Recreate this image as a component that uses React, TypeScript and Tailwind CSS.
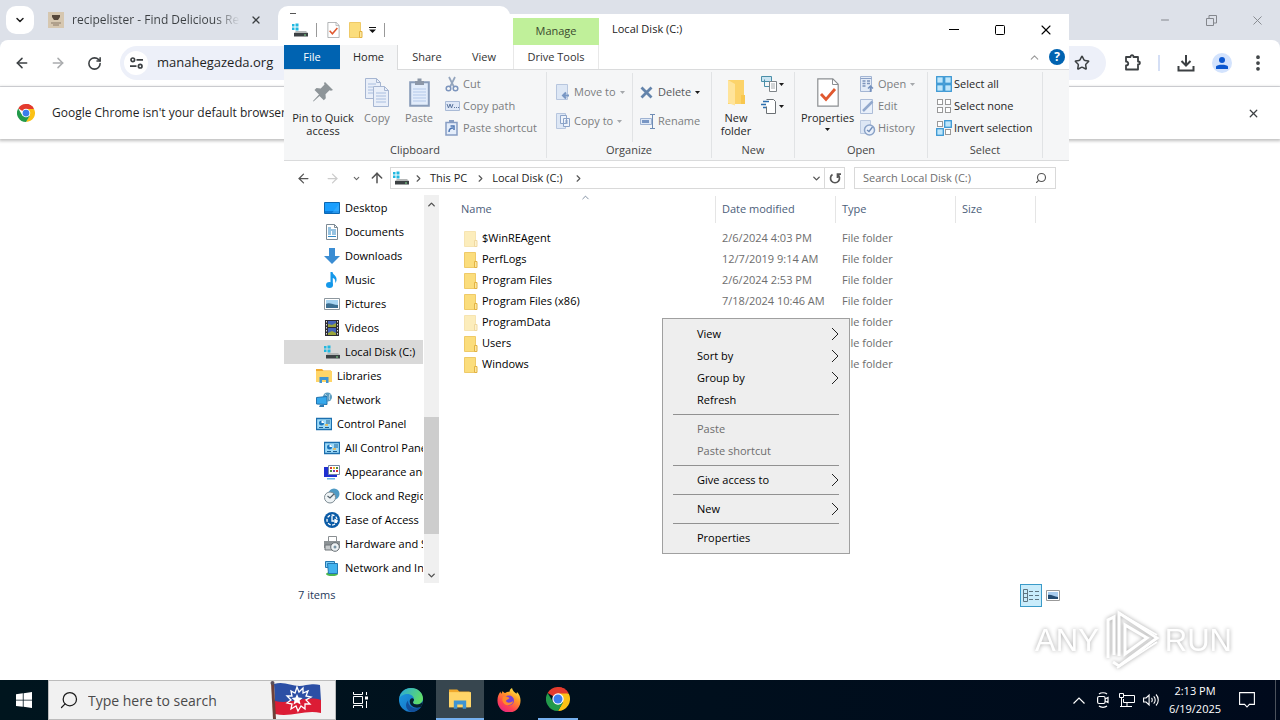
import type { ReactNode } from 'react';
import clsx from 'clsx';
import {
  ArrowLeft,
  ArrowRight,
  ArrowUp,
  ChevronDown,
  ChevronRight,
  ChevronUp,
  Minus,
  MoreVertical,
  RotateCw,
  Search,
  Square,
  Star,
  X,
} from 'lucide-react';

interface FileEntry {
  name: string;
  modified: string;
  hidden?: boolean;
}

interface TreeEntry {
  label: string;
  icon: ReactNode;
  top?: boolean;
  selected?: boolean;
}

interface MenuEntry {
  label: string;
  submenu?: boolean;
  disabled?: boolean;
}

/* ---------- Icons ---------- */

function DriveIcon() {
  return (
    <svg width="16" height="16" viewBox="0 0 16 16" className="shrink-0">
      <path d="M0 2h2.500v2.500H0zM3.500 1.500h3v3h-3zM0 5.500h2.500V8H0zM3.500 5.500h3v3h-3z" fill="#22b8e0" />
      <path d="M4 9h10l2 2H2z" fill="#b5b8b8" />
      <path d="M2 11h14v3.500H2z" fill="#3c4144" />
      <path d="M12 12.500h2v1h-2z" fill="#7fe08c" />
    </svg>
  );
}

function FolderIcon({ faded }: { faded?: boolean }) {
  return (
    <svg width="14" height="16" viewBox="0 0 14 16" className={clsx('shrink-0', faded && 'opacity-50')}>
      <path d="M.5.500h11v15H.500z" fill="#fbdd7c" stroke="#efca68" />
      <path d="M10.500 9.500h2.500v6h-2.500z" fill="#fde8a0" stroke="#e3b343" />
    </svg>
  );
}

function DesktopIcon() {
  return (
    <svg width="16" height="16" viewBox="0 0 16 16">
      <path d="M.5 2.500h15v11H.500z" fill="#1a9fff" stroke="#0b67b2" />
      <path d="M1 11h14v2H1z" fill="#0a7ad8" />
      <path d="M8 13 15 4v9z" fill="#43b4ff" opacity=".5" />
    </svg>
  );
}

function DocumentIcon() {
  return (
    <svg width="16" height="16" viewBox="0 0 16 16">
      <path d="M2.500.500h8l3 3v12h-11z" fill="#fff" stroke="#7d8a94" />
      <path d="M4 4h3M4 6h8M4 8h3M8 8h4M4 10h3M8 10h4M4 12.500h8" stroke="#2f87c4" />
      <path d="M10.500.500v3h3" fill="none" stroke="#7d8a94" />
    </svg>
  );
}

function DownloadsIcon() {
  return (
    <svg width="16" height="16" viewBox="0 0 16 16">
      <path d="M5 0h6v8h5l-8 8-8-8h5z" fill="#3b8dd3" />
    </svg>
  );
}

function MusicIcon() {
  return (
    <svg width="16" height="16" viewBox="0 0 16 16">
      <ellipse cx="5.500" cy="13" rx="3.500" ry="2.900" fill="#1498ea" />
      <path d="M6.500 0h2c.3 3 4.800 3.500 4 8.500-.2 1.200-.8 2-1.300 2.500.6-3-.7-4.500-2.400-5v7.500H6.500z" fill="#1498ea" />
    </svg>
  );
}

function PictureIcon() {
  return (
    <svg width="16" height="16" viewBox="0 0 16 16">
      <path d="M.5 2.500h15v11H.500z" fill="#fff" stroke="#8d979e" />
      <path d="M2 4h12v8H2z" fill="#a8d5f2" />
      <path d="M2 8c3-2 7 1 12 1v3H2z" fill="#3c6f92" />
    </svg>
  );
}

function VideoIcon() {
  return (
    <svg width="16" height="16" viewBox="0 0 16 16">
      <path d="M1 0h14v16H1z" fill="#2c2c33" />
      <path d="M4 1h8v6H4zM4 8h8v7H4z" fill="#4463b8" />
      <path d="M4 4l4 1 4-2v4H4zM4 13l4-2 4 2v2H4z" fill="#9aa53a" />
      <path d="M2.500 1v14M13.500 1v14" stroke="#ddd" strokeDasharray="1.500 1.500" />
    </svg>
  );
}

function LibrariesIcon({ size = 16 }: { size?: number }) {
  return (
    <svg width={size} height={size} viewBox="0 0 16 16">
      <path d="M0 1h6l1.500 1.500H15V14H0z" fill="#f0a92c" />
      <path d="M0 3h16v11H0z" fill="#ffd568" />
      <path d="M3.500 15V9h9v6h-2.500v-3h-4v3z" fill="#3f94d2" />
    </svg>
  );
}

function NetworkIcon() {
  return (
    <svg width="16" height="16" viewBox="0 0 16 16">
      <circle cx="11.500" cy="5" r="4.500" fill="#5b9cc0" />
      <path d="M9 2c2 2 3 4 2 7M14 2c-1 3-1 5 0 6" stroke="#d6ecf5" fill="none" strokeWidth=".8" />
      <path d="M.5 5.500 11 4.500v8L.500 12z" fill="#35a8ec" stroke="#2273ae" />
      <path d="M4 13h4v2H3z" fill="#2c7cb5" />
    </svg>
  );
}

function ControlPanelIcon() {
  return (
    <svg width="16" height="16" viewBox="0 0 16 16">
      <path d="M.5 2.500h15v11H.500z" fill="#9fdcfa" stroke="#1c6fae" strokeWidth="1.300" />
      <circle cx="5.500" cy="7" r="2.500" fill="#1b75bc" />
      <path d="M5.500 7V4.500A2.500 2.500 0 0 1 8 7z" fill="#fff" />
      <path d="M10 5h4M10 7h4M3 11.500h4M9 11.500h4" stroke="#1b6096" strokeWidth="1.200" />
      <path d="M9 9h3" stroke="#f2b540" strokeWidth="1.500" />
    </svg>
  );
}

function AppearanceIcon() {
  return (
    <svg width="16" height="16" viewBox="0 0 16 16">
      <path d="M0 3h13v10H0z" fill="#1f2fd0" />
      <path d="M4.500 1.500h11v9h-11z" fill="#fff" stroke="#7487a5" />
      <path d="M6 3h2v2H6zM12 6h2v2h-2z" fill="#d23b32" />
      <path d="M9 3h2v2H9z" fill="#efb025" />
      <path d="M12 3h2v2h-2zM6 6h2v2H6z" fill="#4b8c3f" />
      <path d="M9 6h2v2H9z" fill="#7b3fb3" />
      <path d="M3 14h8v1.500H3z" fill="#69b4e4" />
    </svg>
  );
}

function ClockIcon() {
  return (
    <svg width="16" height="16" viewBox="0 0 16 16">
      <circle cx="10" cy="6" r="5.500" fill="#4f9ac4" />
      <circle cx="6" cy="9.500" r="5.500" fill="#eef3f5" stroke="#7d8b93" />
      <path d="m3.500 8 2.500 2 4-4" stroke="#52606a" fill="none" strokeWidth="1.200" />
    </svg>
  );
}

function EaseIcon() {
  return (
    <svg width="16" height="16" viewBox="0 0 16 16">
      <circle cx="8" cy="8" r="8" fill="#0b5ba6" />
      <circle cx="8" cy="8" r="5" fill="none" stroke="#fff" strokeWidth="1.300" strokeDasharray="3 1.500" />
      <path d="M8 4v5h5M10.500 7l2.500 2-2.500 2" stroke="#fff" fill="none" strokeWidth="1.300" />
    </svg>
  );
}

function HardwareIcon() {
  return (
    <svg width="16" height="16" viewBox="0 0 16 16">
      <path d="M4.500.500h8v5h-8z" fill="#fff" stroke="#8a8f92" />
      <path d="M0 5h16v7H0z" fill="#8c9295" />
      <path d="M1 9h7v5H1z" fill="#c6cacc" stroke="#6f7578" />
      <circle cx="11" cy="11" r="4.300" fill="#eef2f4" stroke="#666d72" />
      <circle cx="11" cy="11" r="1.500" fill="#7a95a5" />
    </svg>
  );
}

function NetInternetIcon() {
  return (
    <svg width="16" height="16" viewBox="0 0 16 16">
      <ellipse cx="8" cy="14" rx="6" ry="2" fill="#4cb84f" />
      <path d="M1.500 1.500h9v6h-9z" fill="#7ccbf4" stroke="#2378b2" />
      <path d="M3.500 3.500h10v10h-9z" fill="#42b2ee" stroke="#2378b2" />
    </svg>
  );
}

function ChromeLogo({ size = 18 }: { size?: number }) {
  return (
    <svg width={size} height={size} viewBox="0 0 24 24">
      <path d="M12 12 1.600 6A12 12 0 0 1 22.400 6z" fill="#e33b2e" />
      <path d="M12 12V0a12 12 0 0 1 10.400 6z" fill="#e33b2e" />
      <path d="M12 6.500h10.700A12 12 0 0 1 12 24l5-9z" fill="#fbc116" />
      <path d="M1.600 6A12 12 0 0 0 12 24l5-8.500-9.500 0z" fill="#229a4b" />
      <circle cx="12" cy="12" r="5.700" fill="#fff" />
      <circle cx="12" cy="12" r="4.500" fill="#3b7ded" />
    </svg>
  );
}

function EdgeLogo() {
  return (
    <svg width="24" height="24" viewBox="0 0 24 24">
      <defs>
        <linearGradient id="edgeTop" x1="0" y1="0" x2="1" y2=".4">
          <stop offset="0" stopColor="#27a6e0" />
          <stop offset="1" stopColor="#5fdc6a" />
        </linearGradient>
        <linearGradient id="edgeBase" x1="0" y1="0" x2="1" y2="1">
          <stop offset="0" stopColor="#1b9de2" />
          <stop offset="1" stopColor="#1668bd" />
        </linearGradient>
      </defs>
      <circle cx="12" cy="12" r="12" fill="url(#edgeBase)" />
      <path d="M.3 10C1.500 4 6 0 12 0c7 0 12 5 12 10.500 0 3.500-2.700 6-6 6-2.500 0-4-1-4-2s1-1.300 1-3.200C15 8.500 12 6 8.500 6 5 6 1.500 7.800.3 10z" fill="url(#edgeTop)" />
      <path d="M9 12.500c0 5 4.500 8.500 9.500 7.800 1.500-.2 3-.9 3.800-1.200C20 22 16.500 24 13 24c-5.500-1-8-7-4-11.500z" fill="#124f9b" />
      <path d="M14 14.500c0 1 1.500 2 4 2 2.200 0 4.500-1 5.700-3.200-.2 2.200-.7 4-1.500 5.500-6 2.500-11.500-.5-11.500-5.500 0-1.500 1-3 2.300-3 1 0 2 .7 2 1.500 0 1-1 1.500-1 2.700z" fill="#06202e" />
    </svg>
  );
}

function FirefoxLogo() {
  return (
    <svg width="24" height="24" viewBox="0 0 24 24">
      <defs>
        <linearGradient id="foxBody" x1=".8" y1="0" x2=".2" y2="1">
          <stop offset="0" stopColor="#fff04d" />
          <stop offset=".35" stopColor="#ff9a26" />
          <stop offset=".7" stopColor="#ff4450" />
          <stop offset="1" stopColor="#e3218a" />
        </linearGradient>
      </defs>
      <path d="M3.500 3.500c0 1 .3 1.800.8 2.300l1.500-2.800c.4 1 1.200 1.800 2.300 2C9.700 4 11 3.600 12.500 3.800 12.600 2.200 13.500.8 15 0c.3 2.800 3 4.300 4.500 5.800L20 4c2.500 2.500 3.700 5.500 3.500 9A11.500 11.500 0 0 1 .5 13C.3 9.500 1.500 6 3.500 3.500z" fill="url(#foxBody)" />
      <circle cx="12" cy="12.500" r="5" fill="#7541d8" />
      <path d="M6 8.500c3-.5 4.500.5 6.500 1.500-1 1.500-3 1.500-3.500 3 1 2.500 5 2 7 0 0 5-9 6-10.500 0-.3-1.500 0-3 .5-4.500z" fill="#ff8a2a" />
    </svg>
  );
}

function FlagArt() {
  return (
    <svg width="52" height="38" viewBox="0 0 52 38">
      <path d="M4 3c12-4 20 5 32 1 6-1 10-1 14 0l1 16c-15-4-30 4-46 1z" fill="#2c4fa5" />
      <path d="M5 20c16 4 31-6 46-1v13c-16-4-30 5-46 1z" fill="#dc1c35" />
      <path d="m27 6 2 5 4-4 0 5 5-2-2 5 5 1-5 3 4 4-5 0 0 5-4-3-3 5-2-5-5 3 1-5-5-1 4-3-4-4 5 0-1-5 4 2z" fill="none" stroke="#fff" strokeWidth="1.300" />
      <path d="m27 13 1.600 3.600 4 .4-3 2.600 1 4-3.600-2-3.500 2 1-4-3-2.600 4-.4z" fill="#fff" />
      <path d="M1 2h3l2 36H3z" fill="#6f4038" />
      <circle cx="2.500" cy="2" r="2" fill="#5a4f5d" />
    </svg>
  );
}

function Caret({ light }: { light?: boolean }) {
  return (
    <svg width="5" height="3" viewBox="0 0 5 3" className="shrink-0">
      <path d="M0 0h5L2.500 3z" fill={light ? '#a5a8ab' : '#1b1b1b'} />
    </svg>
  );
}

function CheckDocIcon({ size }: { size: 'small' | 'large' }) {
  return (
    <svg width={size === 'large' ? 22 : 13} height={size === 'large' ? 29 : 16} viewBox="0 0 22 29">
      <path d="M.8.800h15l5.400 5.400v22H.800z" fill="#fff" stroke="#8c8f92" strokeWidth="1.200" />
      <path d="M15.500 1v5.500H21" fill="none" stroke="#8c8f92" />
      <path d="m4 16 5 5.500 9-10.500" stroke="#e0582f" strokeWidth="2.800" fill="none" />
    </svg>
  );
}

function PinIcon() {
  return (
    <svg width="22" height="22" viewBox="0 0 22 22">
      <path d="m13 1 8 8-2 .8-1.500-.5-4 4 .3 4-2 2L7.500 15l-6 5.500L1 20l6-6.500-4.500-4.500 2-2 4.200.4 3.800-4L12 2z" fill="#8e9599" />
    </svg>
  );
}

function CopyPages() {
  return (
    <svg width="25" height="29" viewBox="0 0 25 29">
      <g fill="#e9eff9" stroke="#a6b6d2">
        <path d="M.5.500h11l4 4v16H.500z" />
        <path d="M8.500 8.500h11l4 4v16h-15z" />
      </g>
      <path d="M3 6h8M3 9h5M3 12h5M3 15h5M11 15h10M11 18h10M11 21h10M11 24h10" stroke="#a9bedf" />
      <path d="M11.500.500v4h4M19.500 8.500v4h4" fill="none" stroke="#a6b6d2" />
    </svg>
  );
}

function PasteBoard() {
  return (
    <svg width="21" height="29" viewBox="0 0 21 29">
      <path d="M1.200 4.200h18.600v23.600H1.200z" fill="#e2ecfb" stroke="#899cb9" strokeWidth="2" />
      <path d="M6 3h2.500V.500h4V3H15v4H6z" fill="#8c97a8" />
      <path d="M4 11h13M4 14h13M4 17h13M4 20h13M4 23h13" stroke="#b3c8e9" />
    </svg>
  );
}

function CutIcon() {
  return (
    <svg width="14" height="16" viewBox="0 0 14 16">
      <path d="M4 1l5 10M10 1 5 11" stroke="#94a5bd" strokeWidth="1.700" />
      <circle cx="3.500" cy="12.500" r="2.300" fill="none" stroke="#7d95bd" strokeWidth="1.500" />
      <circle cx="10.500" cy="12.500" r="2.300" fill="none" stroke="#7d95bd" strokeWidth="1.500" />
    </svg>
  );
}

function CopyPathIcon() {
  return (
    <svg width="15" height="10" viewBox="0 0 15 10">
      <path d="M.5.500h14v9H.500z" fill="#dfe8f7" stroke="#a9bad6" />
      <path d="m2 3 1.500 4L5 3l1.500 4L8 3M9 6.500h1M11 6.500h1M13 6.500h1" stroke="#5d779f" fill="none" />
    </svg>
  );
}

function PasteShortcutIcon() {
  return (
    <svg width="13" height="16" viewBox="0 0 13 16">
      <path d="M1 2.500h11V15H1z" fill="#e4edfa" stroke="#869dc3" strokeWidth="1.500" />
      <path d="M4 0h5v3H4z" fill="#869dc3" />
      <path d="M4 12c0-3 1-4 4-4M5.500 6H9v4" stroke="#4d76b3" fill="none" strokeWidth="1.500" />
    </svg>
  );
}

function MoveIcon() {
  return (
    <svg width="14" height="16" viewBox="0 0 14 16">
      <path d="M.5.500h11v15H.500z" fill="#dde7f5" stroke="#b7c6de" />
      <path d="M13 11.500H7m3-3L7 11.500l3 3" stroke="#7997c4" strokeWidth="2" fill="none" />
    </svg>
  );
}

function CopyToIcon() {
  return (
    <svg width="14" height="16" viewBox="0 0 14 16">
      <path d="M.5.500h9v15h-9z" fill="#dde7f5" stroke="#b7c6de" />
      <path d="M4.500 2.500h6v8h-6zM7.500 5.500h6v8h-6z" fill="#eff4fb" stroke="#8ba3c8" />
      <path d="M9 8h3M9 10h3" stroke="#8ba3c8" />
    </svg>
  );
}

function DeleteIcon() {
  return (
    <svg width="13" height="13" viewBox="0 0 13 13">
      <path d="m1.500 1.500 10 10m0-10-10 10" stroke="#6484ab" strokeWidth="2.800" />
    </svg>
  );
}

function RenameIcon() {
  return (
    <svg width="16" height="15" viewBox="0 0 16 15">
      <path d="M.5 4.500h11v6H.500z" fill="#dfe9f7" stroke="#9fb3d2" />
      <path d="M2 6h7v3H2z" fill="#7896c4" />
      <path d="M10 .5h5M10 14.500h5M12.500.500v14" stroke="#6f8cb5" />
    </svg>
  );
}

function NewFolderIcon() {
  return (
    <svg width="20" height="27" viewBox="0 0 20 27">
      <path d="M2 1h16v24H2z" fill="#fcd36a" />
      <path d="m2 1 7 4v21.500L2 24z" fill="#ffe49a" />
      <path d="M15 16h4v9h-4z" fill="#f8c74f" />
    </svg>
  );
}

function NewItemIcon() {
  return (
    <svg width="16" height="16" viewBox="0 0 16 16">
      <path d="M.5.500h10v5H.500z" fill="#cbe5f2" stroke="#4b8fa8" />
      <path d="M3.500 3.500v7h5" fill="none" stroke="#4b8fa8" />
      <path d="M8.500 5.500h7v10h-7z" fill="#fff" stroke="#7e8488" />
      <path d="M10 8h4M10 10h4M10 12h4" stroke="#a6abae" />
    </svg>
  );
}

function EasyAccessIcon() {
  return (
    <svg width="16" height="16" viewBox="0 0 16 16">
      <path d="M5.500 1.500h7l2 2v12h-9v-7" fill="#fff" stroke="#6b7074" />
      <path d="M2 3.500h6M0 6.500h5M2 9.500h3" stroke="#2d6fae" strokeWidth="1.300" />
    </svg>
  );
}

function OpenIcon() {
  return (
    <svg width="14" height="16" viewBox="0 0 14 16">
      <path d="M.5.500h11v15H.500z" fill="#e3ebf7" stroke="#a3b5d3" />
      <path d="M.5 2.500h11" stroke="#8aa0c5" />
      <path d="M2.500 5h3M2.500 7.500h3M2.500 10h3M7 5h3M7 7.500h3" stroke="#7d94bb" strokeWidth="1.300" />
      <path d="M10.500 16v-5M8 12.500l2.500-2.500 2.500 2.500" stroke="#7591bd" strokeWidth="1.500" fill="none" />
    </svg>
  );
}

function EditIcon() {
  return (
    <svg width="14" height="16" viewBox="0 0 14 16">
      <path d="M.5 1.500h12v14H.500z" fill="#e9f0fa" stroke="#adbdd8" />
      <path d="M3 13 12.500 3.500" stroke="#92a9cd" strokeWidth="2.500" />
    </svg>
  );
}

function HistoryIcon() {
  return (
    <svg width="16" height="16" viewBox="0 0 16 16">
      <path d="M.5.500h10v13H.500z" fill="#dde7f5" stroke="#bccae0" />
      <circle cx="9.500" cy="10" r="5" fill="#e9f0fb" stroke="#8ba3c8" strokeWidth="1.500" />
      <path d="m7 10 2 1.500L12.500 7" stroke="#6f8cb8" fill="none" strokeWidth="1.300" />
    </svg>
  );
}

// which of the four tiles are filled blue
function TilesIcon({ filled }: { filled: boolean[] }) {
  const spots = [
    [1, 1],
    [9, 1],
    [1, 9],
    [9, 9],
  ];
  return (
    <svg width="16" height="16" viewBox="0 0 16 16">
      {spots.map(([x, y], i) => (
        <rect
          key={i}
          x={filled[i] ? x - 0.3 : x + 0.5}
          y={filled[i] ? y - 0.3 : y + 0.5}
          width={filled[i] ? 6.6 : 5}
          height={filled[i] ? 6.6 : 5}
          fill={filled[i] ? '#bfe6fb' : '#fff'}
          stroke={filled[i] ? '#3a97d3' : '#999'}
          strokeWidth={filled[i] ? 1.3 : 1}
        />
      ))}
    </svg>
  );
}

function RefreshIcon() {
  return (
    <svg width="12" height="12" viewBox="0 0 12 12" fill="none" stroke="currentColor" strokeWidth="1.700">
      <path d="M3.500 2.500a4.500 4.500 0 1 0 5 0M8.500 6V2.200h3.500" />
    </svg>
  );
}

/* ---------- Data ---------- */

const FILES: FileEntry[] = [
  { name: '$WinREAgent', modified: '2/6/2024 4:03 PM', hidden: true },
  { name: 'PerfLogs', modified: '12/7/2019 9:14 AM' },
  { name: 'Program Files', modified: '2/6/2024 2:53 PM' },
  { name: 'Program Files (x86)', modified: '7/18/2024 10:46 AM' },
  { name: 'ProgramData', modified: '2/6/2024 2:57 PM', hidden: true },
  { name: 'Users', modified: '2/6/2024 2:40 PM' },
  { name: 'Windows', modified: '7/18/2024 10:50 AM' },
];

const TREE: TreeEntry[] = [
  { label: 'Desktop', icon: <DesktopIcon /> },
  { label: 'Documents', icon: <DocumentIcon /> },
  { label: 'Downloads', icon: <DownloadsIcon /> },
  { label: 'Music', icon: <MusicIcon /> },
  { label: 'Pictures', icon: <PictureIcon /> },
  { label: 'Videos', icon: <VideoIcon /> },
  { label: 'Local Disk (C:)', icon: <DriveIcon />, selected: true },
  { label: 'Libraries', icon: <LibrariesIcon />, top: true },
  { label: 'Network', icon: <NetworkIcon />, top: true },
  { label: 'Control Panel', icon: <ControlPanelIcon />, top: true },
  { label: 'All Control Panel Items', icon: <ControlPanelIcon /> },
  { label: 'Appearance and Personalization', icon: <AppearanceIcon /> },
  { label: 'Clock and Region', icon: <ClockIcon /> },
  { label: 'Ease of Access', icon: <EaseIcon /> },
  { label: 'Hardware and Sound', icon: <HardwareIcon /> },
  { label: 'Network and Internet', icon: <NetInternetIcon /> },
];

const MENU: MenuEntry[][] = [
  [
    { label: 'View', submenu: true },
    { label: 'Sort by', submenu: true },
    { label: 'Group by', submenu: true },
    { label: 'Refresh' },
  ],
  [
    { label: 'Paste', disabled: true },
    { label: 'Paste shortcut', disabled: true },
  ],
  [{ label: 'Give access to', submenu: true }],
  [{ label: 'New', submenu: true }],
  [{ label: 'Properties' }],
];

/* ---------- Browser ---------- */

function Browser() {
  return (
    <div className="flex h-full flex-col bg-white text-[#3c4043]">
      <div className="flex h-10 shrink-0 items-center bg-[#dde1e9] pl-1.5">
        <button aria-label="Search tabs" className="flex size-7 items-center justify-center rounded-[10px] bg-white text-[#1f1f1f]">
          <ChevronDown size={12} strokeWidth={3} />
        </button>
        <div className="flex w-[244px] items-center pl-3.5">
          <svg width="16" height="16" viewBox="0 0 16 16" className="shrink-0">
            <path d="M0 0h16v16H0z" fill="#d6c7b0" />
            <path d="M4 3h8v2l-2 3H6L4 5z" fill="#57483b" />
            <path d="M3 11h10M5 13h6" stroke="#8b7b68" />
          </svg>
          <span className="ml-2 w-[168px] overflow-hidden bg-linear-to-r from-[#3c4043] from-85% to-transparent bg-clip-text text-[12px] whitespace-nowrap text-transparent">
            recipelister - Find Delicious Recipes
          </span>
          <button aria-label="Close tab" className="ml-2.5 text-[#3c4043]">
            <X size={12} strokeWidth={2.500} />
          </button>
        </div>
        <div className="flex h-[34px] w-[232px] self-end rounded-t-[10px] bg-white pt-[7px] pl-3">
          <span className="h-px w-1.5 bg-[#555]" />
        </div>
        <div className="ml-auto flex items-center text-[#84878d]">
          <button aria-label="Minimize" className="flex w-[46px] justify-center">
            <Minus size={12} strokeWidth={2} />
          </button>
          <button aria-label="Restore" className="flex w-[46px] justify-center">
            <svg width="11" height="11" viewBox="0 0 11 11" fill="none" stroke="currentColor">
              <path d="M.5 3.500h7v7h-7zM3 3V.500h7.500V8H8" />
            </svg>
          </button>
          <button aria-label="Close" className="flex w-[46px] justify-center">
            <X size={15} strokeWidth={1.500} />
          </button>
        </div>
      </div>

      <div className="bg-[#dde1e9]">
        <div className="flex h-[47px] items-center rounded-t-lg border-b border-[#dfe1e5] bg-white px-3">
          <button aria-label="Back" className="flex w-5 justify-center">
            <ArrowLeft size={16} strokeWidth={2.300} />
          </button>
          <button aria-label="Forward" className="ml-4 flex w-5 justify-center text-[#aaacae]">
            <ArrowRight size={16} strokeWidth={2.300} />
          </button>
          <button aria-label="Reload" className="ml-4 flex w-5 justify-center">
            <RotateCw size={15} strokeWidth={2.500} />
          </button>
          <div className="ml-4 flex h-[34px] flex-1 items-center rounded-full bg-[#edf0f9] px-1">
            <button aria-label="View site information" className="flex size-6 items-center justify-center rounded-full bg-white">
              <svg width="13" height="12" viewBox="0 0 13 12" fill="none" stroke="currentColor" strokeWidth="1.700">
                <circle cx="2.800" cy="2.800" r="1.800" />
                <path d="M6.500 2.800H13M0 9.200h6.500" />
                <circle cx="10.200" cy="9.200" r="1.800" />
              </svg>
            </button>
            <input
              aria-label="Address"
              className="ml-[9px] min-w-0 flex-1 bg-transparent text-[13px] text-[#1f1f1f] outline-none"
              defaultValue="manahegazeda.org"
            />
            <button aria-label="Bookmark this tab" className="mr-3">
              <Star size={16} strokeWidth={2.300} />
            </button>
          </div>
          <button aria-label="Extensions" className="ml-[18px]">
            <svg width="18" height="18" viewBox="0 0 18 18" fill="none" stroke="currentColor" strokeWidth="1.800">
              <path d="M2 3h4.500c0-2.500 3-2.500 3 0H14v4.500c2.500 0 2.500 3 0 3V15.500H2v-4c3 0 3-4 0-4z" strokeLinejoin="round" />
            </svg>
          </button>
          <span className="ml-4 h-4 w-0.5 bg-[#d5dff5]" />
          <button aria-label="Downloads" className="ml-4">
            <svg width="20" height="20" viewBox="0 0 20 20" fill="none" stroke="currentColor" strokeWidth="2">
              <path d="M10 2v10M5.500 8l4.500 4.500L14.500 8M2.500 13v4.500h15V13" />
            </svg>
          </button>
          <button aria-label="Profile" className="ml-4 flex size-5 items-center justify-center rounded-full bg-[#d3e3fd]">
            <svg width="12" height="12" viewBox="0 0 12 12" fill="#0b57d0">
              <circle cx="6" cy="3" r="3" />
              <path d="M0 12V9.500C1 7 11 7 12 9.500V12z" />
            </svg>
          </button>
          <button aria-label="Menu" className="ml-4">
            <MoreVertical size={20} strokeWidth={2.500} />
          </button>
        </div>
      </div>

      <div className="flex h-[52px] shrink-0 items-center pr-5 pl-[17px] shadow-[0_1px_3px_1px_rgba(0,0,0,0.25)]">
        <ChromeLogo />
        <span className="ml-[17px] text-[12px] text-[#1f1f1f]">
          Google Chrome isn't your default browser
        </span>
        <button aria-label="Dismiss" className="ml-auto">
          <X size={13} strokeWidth={2.300} />
        </button>
      </div>

      <div className="flex flex-1 items-end justify-end pr-12 pb-2">
        <Watermark />
      </div>
    </div>
  );
}

function Watermark() {
  return (
    <div className="flex items-center gap-1 font-['Liberation_Sans',sans-serif] text-[31px] leading-none text-white drop-shadow-[0_0_2px_rgba(0,0,0,0.35)]">
      <span>ANY</span>
      <svg width="58" height="64" viewBox="0 0 58 64" fill="none" stroke="#fff" strokeWidth="3">
        <path d="M5 50V12l6-3v38" />
        <path d="M16 48V5l38 25-38 28-6-4" />
        <path d="M22 17v29l22-16z" />
        <path d="m16 5 38 22M14 60l40-26" strokeWidth="2" />
      </svg>
      <span>RUN</span>
    </div>
  );
}

/* ---------- Explorer ---------- */

function RibbonGroup({ title, width, children }: { title: string; width: string; children: ReactNode }) {
  return (
    <section className={clsx('my-0.5 flex shrink-0 flex-col border-r border-[#e1e3e5]', width)}>
      <div className="flex h-[70px] pt-px">{children}</div>
      <h2 className="text-center text-[11px] leading-4 text-[#444]">{title}</h2>
    </section>
  );
}

interface RibbonButtonProps {
  icon: ReactNode;
  label: string;
  muted?: boolean;
  caret?: boolean;
  width?: string;
}

function BigButton({ icon, label, muted, caret, width }: RibbonButtonProps) {
  return (
    <button className={clsx('flex flex-col items-center pt-1', width, muted ? 'text-[#7b7d80]' : 'text-[#262626]')}>
      <span className="flex h-[30px] items-center">{icon}</span>
      <span className="mt-1 text-[11px] leading-[13px] whitespace-pre">{label}</span>
      {caret && (
        <span className="mt-1">
          <Caret />
        </span>
      )}
    </button>
  );
}

function SmallButton({ icon, label, muted, caret }: RibbonButtonProps) {
  return (
    <button
      className={clsx(
        'flex h-[22px] items-center text-[11px] whitespace-nowrap',
        muted ? 'text-[#7b7d80]' : 'text-[#262626]'
      )}
    >
      <span className="flex w-[18px] shrink-0 items-center">{icon}</span>
      {label}
      {caret && (
        <span className="ml-1">
          <Caret light />
        </span>
      )}
    </button>
  );
}

function Ribbon() {
  return (
    <div className="flex h-[92px] shrink-0 border-y border-[#dadbdc] bg-[#f5f6f7]">
      <RibbonGroup title="Clipboard" width="w-[263px]">
        <div className="flex pl-1.5">
          <BigButton icon={<PinIcon />} label={'Pin to Quick\naccess'} width="w-[66px]" />
          <BigButton icon={<CopyPages />} label="Copy" width="w-[42px]" muted />
          <BigButton icon={<PasteBoard />} label="Paste" width="w-[42px]" muted />
        </div>
        <div className="ml-[5px] flex flex-col">
          <SmallButton icon={<CutIcon />} label="Cut" muted />
          <SmallButton icon={<CopyPathIcon />} label="Copy path" muted />
          <SmallButton icon={<PasteShortcutIcon />} label="Paste shortcut" muted />
        </div>
      </RibbonGroup>

      <RibbonGroup title="Organize" width="w-[165px]">
        <div className="flex w-[86px] flex-col gap-[7px] border-r border-[#e1e3e5] pt-2 pl-[9px]">
          <SmallButton icon={<MoveIcon />} label="Move to" muted caret />
          <SmallButton icon={<CopyToIcon />} label="Copy to" muted caret />
        </div>
        <div className="flex flex-col gap-[7px] pt-2 pl-[7px]">
          <button className="flex h-[22px] items-center text-[11px] text-[#55585b]">
            <span className="w-[18px]">
              <DeleteIcon />
            </span>
            Delete
            <span className="ml-1">
              <Caret />
            </span>
          </button>
          <SmallButton icon={<RenameIcon />} label="Rename" muted />
        </div>
      </RibbonGroup>

      <RibbonGroup title="New" width="w-[83px]">
        <div className="flex w-12 justify-center">
          <BigButton icon={<NewFolderIcon />} label={'New\nfolder'} />
        </div>
        <div className="flex flex-col pl-px">
          <button aria-label="New item" className="flex h-[22px] items-center gap-0.5">
            <NewItemIcon />
            <Caret />
          </button>
          <button aria-label="Easy access" className="flex h-[22px] items-center gap-0.5">
            <EasyAccessIcon />
            <Caret />
          </button>
        </div>
      </RibbonGroup>

      <RibbonGroup title="Open" width="w-[133px]">
        <div className="flex w-[65px] justify-center">
          <BigButton icon={<CheckDocIcon size="large" />} label="Properties" caret />
        </div>
        <div className="flex flex-col">
          <SmallButton icon={<OpenIcon />} label="Open" muted caret />
          <SmallButton icon={<EditIcon />} label="Edit" muted />
          <SmallButton icon={<HistoryIcon />} label="History" muted />
        </div>
      </RibbonGroup>

      <RibbonGroup title="Select" width="w-[115px]">
        <div className="flex flex-col pl-2">
          <SmallButton icon={<TilesIcon filled={[true, true, true, true]} />} label="Select all" />
          <SmallButton icon={<TilesIcon filled={[false, false, false, false]} />} label="Select none" />
          <SmallButton icon={<TilesIcon filled={[false, true, true, false]} />} label="Invert selection" />
        </div>
      </RibbonGroup>
    </div>
  );
}

function TitleBar() {
  return (
    <header className="shrink-0 text-[#1b1b1b]">
      <div className="flex h-[31px] items-center pl-2">
        <DriveIcon />
        <span className="ml-2 h-3.5 w-px bg-[#999]" />
        <button aria-label="Properties" className="ml-2.5">
          <CheckDocIcon size="small" />
        </button>
        <button aria-label="New folder" className="ml-[9px]">
          <FolderIcon />
        </button>
        <button aria-label="Customize toolbar" className="ml-1.5">
          <svg width="7" height="6" viewBox="0 0 7 6">
            <path d="M0 .5h7" stroke="#111" />
            <path d="M0 2.500h7L3.500 6z" fill="#111" />
          </svg>
        </button>
        <span className="ml-2 h-3.5 w-px bg-[#999]" />
        <span className="ml-auto flex h-[27px] w-[86px] items-center justify-center self-end bg-[#c0f09a] text-[11px] text-[#3b4a2f]">
          Manage
        </span>
        <h1 className="ml-[13px] w-[319px] text-[11px]">Local Disk (C:)</h1>
        <button aria-label="Minimize" className="flex w-[46px] justify-center">
          <span className="h-px w-2.5 bg-black" />
        </button>
        <button aria-label="Maximize" className="flex w-[46px] justify-center">
          <Square size={12} strokeWidth={2} strokeLinejoin="miter" className="text-black" />
        </button>
        <button aria-label="Close" className="flex w-[46px] justify-center">
          <X size={16} strokeWidth={1.600} className="text-black" />
        </button>
      </div>
      <div className="flex h-6 items-stretch text-[11px] text-[#333]">
        <button className="w-14 bg-[#0063b1] text-white">File</button>
        <button className="relative z-10 -mb-px w-[58px] border-r border-[#dadbdc] bg-[#f5f6f7] text-[#262626]">Home</button>
        <button className="w-[58px]">Share</button>
        <button className="w-14">View</button>
        <button className="ml-px w-[86px] border-x border-[#e8e8e8]">Drive Tools</button>
        <button aria-label="Collapse ribbon" className="ml-auto text-[#9a9a9a]">
          <ChevronUp size={13} />
        </button>
        <button aria-label="Help" className="mr-1 ml-2 flex size-4 items-center justify-center self-center rounded-full bg-[#0063b1] text-[12px] font-bold text-white">
          ?
        </button>
      </div>
    </header>
  );
}

function AddressBar() {
  return (
    <div className="flex h-[34px] shrink-0 items-center pr-[13px] pl-3 text-[11px] text-[#222]">
      <button aria-label="Back" className="text-[#555]">
        <ArrowLeft size={15} strokeWidth={2} />
      </button>
      <button aria-label="Forward" className="ml-3.5 text-[#ccc]">
        <ArrowRight size={15} strokeWidth={2} />
      </button>
      <button aria-label="Recent locations" className="ml-3 text-[#666]">
        <ChevronDown size={9} strokeWidth={3} />
      </button>
      <button aria-label="Up" className="ml-2 text-[#555]">
        <ArrowUp size={16} strokeWidth={2.300} />
      </button>
      <div className="ml-[5px] flex h-[22px] flex-1 items-center border border-[#d9d9d9] pl-0.5">
        <DriveIcon />
        <ChevronRight size={11} strokeWidth={2.500} className="ml-1 text-[#555]" />
        <button className="ml-1.5">This PC</button>
        <ChevronRight size={11} strokeWidth={2.500} className="ml-2 text-[#555]" />
        <button className="ml-1.5">Local Disk (C:)</button>
        <ChevronRight size={11} strokeWidth={2.500} className="ml-2.5 text-[#555]" />
        <button aria-label="Previous locations" className="mr-0.5 ml-auto text-[#555]">
          <ChevronDown size={11} strokeWidth={3} />
        </button>
        <button aria-label="Refresh" className="flex h-full w-5 items-center justify-center border-l border-[#d9d9d9] text-[#555]">
          <RefreshIcon />
        </button>
      </div>
      <div className="ml-[9px] flex h-[22px] w-[202px] items-center border border-[#d9d9d9] px-2">
        <input
          aria-label="Search"
          placeholder="Search Local Disk (C:)"
          className="min-w-0 flex-1 bg-transparent placeholder:text-[#6d6d6d]"
        />
        <Search size={12} strokeWidth={2.300} className="-scale-x-100 text-[#555]" />
      </div>
    </div>
  );
}

function NavTree() {
  return (
    <nav className="flex w-[155px] shrink-0">
      <ul className="w-[139px] overflow-hidden pt-px text-[11px] text-black">
        {TREE.map((item) => (
          <li key={item.label}>
            <a
              href="#"
              className={clsx(
                'flex h-6 items-center gap-[5px] whitespace-nowrap',
                item.top ? 'pl-8' : 'pl-10',
                item.selected && 'bg-[#d9d9d9]'
              )}
            >
              <span className="shrink-0">{item.icon}</span>
              {item.label}
            </a>
          </li>
        ))}
      </ul>
      <div className="ml-px flex w-[15px] flex-col items-center bg-[#f0f0f0] text-[#505050]">
        <ChevronUp size={11} strokeWidth={3} className="my-1" />
        <div className="mt-auto h-[117px] w-full bg-[#cdcdcd]" />
        <ChevronDown size={11} strokeWidth={3} className="mt-9 mb-0.5" />
      </div>
    </nav>
  );
}

function FileTable() {
  const columns = [
    { label: 'Name', width: 'w-[255px]', pad: 'pl-0' },
    { label: 'Date modified', width: 'w-[120px]', pad: 'pl-1.5' },
    { label: 'Type', width: 'w-[120px]', pad: 'pl-1.5' },
    { label: 'Size', width: 'w-20', pad: 'pl-1.5' },
  ];

  return (
    <div className="flex-1 pt-px pl-[22px]">
      <table className="table-fixed border-collapse text-[11px] text-[#6d6d6d]">
        <thead>
          <tr className="h-8">
            {columns.map((col) => (
              <th key={col.label} className={clsx('p-0 text-left align-top font-normal text-[#4c607a]', col.width)}>
                <div className={clsx('relative flex h-[27px] items-center border-r border-[#e5e5e5]', col.pad)}>
                  {col.label}
                  {col.label === 'Name' && (
                    <ChevronUp size={11} strokeWidth={1.500} className="absolute -top-1 left-[119px]" />
                  )}
                </div>
              </th>
            ))}
          </tr>
        </thead>
        <tbody>
          {FILES.map((file) => (
            <tr key={file.name} className="h-[21px] whitespace-nowrap">
              <td className="p-0 text-black">
                <span className="flex items-center gap-1 pl-[3px]">
                  <FolderIcon faded={file.hidden} />
                  {file.name}
                </span>
              </td>
              <td className="p-0 pl-1.5">{file.modified}</td>
              <td className="p-0 pl-1.5">File folder</td>
              <td className="p-0" />
            </tr>
          ))}
        </tbody>
      </table>
    </div>
  );
}

function StatusBar() {
  return (
    <footer className="flex h-[25px] shrink-0 items-center pr-[9px] pl-3.5 text-[11px] text-[#26395b]">
      7 items
      <button aria-label="Details view" className="ml-auto flex h-[23px] w-[22px] items-center justify-center border border-[#3a9bc9] bg-[#c9ecfb]">
        <svg width="16" height="13" viewBox="0 0 16 13" fill="none" stroke="#5f7480">
          <path d="M.5.500h4v12h-4zM.5 4.500h4M.5 8.500h4" />
          <path d="M6 2.500h4M6 6.500h4M6 10.500h4M12 2.500h4M12 6.500h4M12 10.500h4" />
        </svg>
      </button>
      <button aria-label="Large icons view" className="ml-1">
        <svg width="14" height="11" viewBox="0 0 14 11">
          <path d="M.5.500h13v10H.500z" fill="#fff" stroke="#9a9a9a" />
          <path d="M2 2h10v7H2z" fill="#a9cdef" />
          <path d="M2 5c3-1 6 2 10 2v2H2z" fill="#244b71" />
        </svg>
      </button>
    </footer>
  );
}

function ContextMenu() {
  return (
    <div role="menu" className="absolute top-[304px] left-[378px] w-[188px] border border-[#a0a0a0] bg-[#eee] px-2.5 py-1 text-[11px] text-black">
      {MENU.map((group, i) => (
        <div key={i}>
          {i > 0 && <div className="my-[3px] h-px bg-[#919191]" />}
          {group.map((item) => (
            <button
              key={item.label}
              role="menuitem"
              disabled={item.disabled}
              className="flex h-[22px] w-full items-center justify-between pl-6 disabled:text-[#6d6d6d]"
            >
              {item.label}
              {item.submenu && (
                <svg width="8" height="14" viewBox="0 0 8 14" fill="none" stroke="#222">
                  <path d="m1 1 6 6-6 6" />
                </svg>
              )}
            </button>
          ))}
        </div>
      ))}
    </div>
  );
}

function Explorer() {
  return (
    <div className="absolute top-3.5 left-[284px] flex h-[594px] w-[785px] flex-col bg-white">
      <TitleBar />
      <Ribbon />
      <AddressBar />
      <div className="flex min-h-0 flex-1 overflow-hidden">
        <NavTree />
        <FileTable />
      </div>
      <StatusBar />
      <ContextMenu />
    </div>
  );
}

/* ---------- Taskbar ---------- */

function Taskbar() {
  return (
    <div className="flex h-10 shrink-0 items-stretch bg-linear-to-r from-[#00151e] to-[#000a1c] text-white">
      <button aria-label="Start" className="flex w-12 items-center justify-center">
        <svg width="16" height="16" viewBox="0 0 16 16" fill="#fff">
          <path d="M0 2.200 6.800 1.300v6.400H0zM7.600 1.200 16 0v7.700H7.600zM0 8.400h6.800v6.400L0 13.900zM7.600 8.400H16V16l-8.400-1.200z" />
        </svg>
      </button>
      <label className="flex w-72 items-center border border-[#bcbcbc] bg-[#f1f1f1] pl-2.5">
        <Search size={20} strokeWidth={1.500} className="-scale-x-100 text-[#1b1b1b]" />
        <input
          placeholder="Type here to search"
          className="ml-[9px] w-[180px] bg-transparent text-[14px] placeholder:text-[#4a4a4a]"
        />
        <span className="ml-0.5 self-end">
          <FlagArt />
        </span>
      </label>
      <button aria-label="Task view" className="flex w-12 items-center justify-center">
        <svg width="17" height="16" viewBox="0 0 17 16" fill="none" stroke="#fff">
          <path d="M1.500 4.500h9v7h-9zM1.500 0v2.500h9V0M1.500 16v-2.500h9V16M14.500 0v3M14.500 9v7" />
          <path d="M13 4.500h3v3h-3z" fill="#fff" stroke="none" />
        </svg>
      </button>
      <button aria-label="Microsoft Edge" className="mr-px ml-[3px] flex w-12 items-center justify-center">
        <EdgeLogo />
      </button>
      <button aria-label="File Explorer" className="flex w-12 items-center justify-center border-b-2 border-[#76b0ee] bg-[#37464f]">
        <LibrariesIcon size={22} />
      </button>
      <button aria-label="Firefox" className="ml-px flex w-12 items-center justify-center">
        <FirefoxLogo />
      </button>
      <button aria-label="Google Chrome" className="ml-[5px] flex w-10 items-center justify-center border-b-2 border-[#76b0ee]">
        <ChromeLogo size={24} />
      </button>

      <div className="ml-auto flex items-center">
        <button aria-label="Show hidden icons" className="flex w-6 justify-center">
          <svg width="12" height="7" viewBox="0 0 12 7" fill="none" stroke="#fff" strokeWidth="1.200">
            <path d="m.5 6.500 5.500-5.500 5.500 5.500" />
          </svg>
        </button>
        <button aria-label="Meet now" className="flex w-6 justify-center">
          <svg width="12" height="16" viewBox="0 0 12 16" fill="none" stroke="#fff" strokeWidth="1.200">
            <rect x=".600" y="4.500" width="7.500" height="7" rx="1.500" />
            <path d="m8 7 3-1.500v5L8 9M2 2c2-1.700 6-1.700 8 0M2 14c2 1.700 6 1.700 8 0" />
          </svg>
        </button>
        <button aria-label="Network" className="flex w-6 justify-center">
          <svg width="16" height="14" viewBox="0 0 16 14" fill="none" stroke="#fff">
            <path d="M5 2.500h10.500v7H4.500V6M.5.500h4v4h-4zM2.500 5v8.500M1 13.500h12M8 10v3.500" />
          </svg>
        </button>
        <button aria-label="Volume" className="flex w-6 justify-center">
          <svg width="17" height="14" viewBox="0 0 17 14" fill="none" stroke="#fff" strokeWidth="1.100">
            <path d="M.6 5h2.500l3-3v10l-3-3H.600zM8.500 5c1 1 1 3 0 4M10.700 3.300c2 2 2 5.400 0 7.400M13 1.500c3 3 3 8 0 11" />
          </svg>
        </button>
        <div className="w-16 text-center text-[11px] leading-[18px]">
          <div>2:13 PM</div>
          <div>6/19/2025</div>
        </div>
        <button aria-label="Notifications" className="flex w-10 justify-center">
          <svg width="16" height="16" viewBox="0 0 16 16" fill="none" stroke="#fff" strokeWidth="1.100">
            <path d="M.6.600h14.800v11.800h-5L8 15l-2.400-2.600h-5z" />
          </svg>
        </button>
        <span className="ml-2 h-10 w-[5px] border-l border-[#4b525c]" />
      </div>
    </div>
  );
}

export default function App() {
  return (
    <div className="flex h-screen flex-col overflow-hidden font-['Open_Sans','Noto_Sans',sans-serif]">
      <main className="relative min-h-0 flex-1">
        <Browser />
        <Explorer />
      </main>
      <Taskbar />
    </div>
  );
}
